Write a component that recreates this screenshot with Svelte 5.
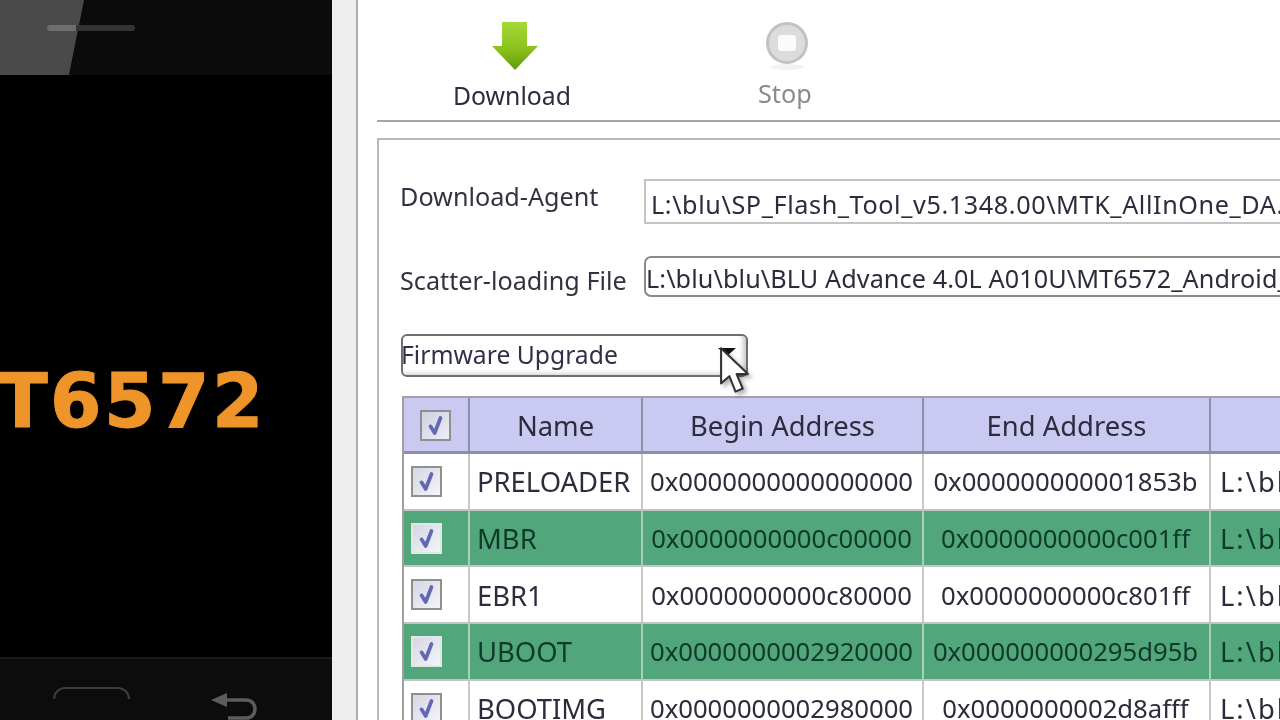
<script>
  const rows = [
    { name: 'PRELOADER', begin: '0x0000000000000000', end: '0x000000000001853b', hot: false },
    { name: 'MBR', begin: '0x0000000000c00000', end: '0x0000000000c001ff', hot: true },
    { name: 'EBR1', begin: '0x0000000000c80000', end: '0x0000000000c801ff', hot: false },
    { name: 'UBOOT', begin: '0x0000000002920000', end: '0x000000000295d95b', hot: true },
    { name: 'BOOTIMG', begin: '0x0000000002980000', end: '0x0000000002d8afff', hot: false }
  ];
</script>

{#snippet check(cls)}
  <span class="cb {cls}">
    <svg viewBox="0 0 30 30" width="25" height="25" aria-hidden="true">
      <path d="M9 16 L14 24 L21 6" fill="none" stroke="#6468b4" stroke-width="4.4" stroke-linecap="round" stroke-linejoin="round" />
    </svg>
  </span>
{/snippet}

<div class="screen">
  <aside class="phone">
    <div class="status">
      <span class="glare"></span>
      <span class="speaker"></span>
    </div>
    <div class="display"><span class="chip">MT6572</span></div>
    <div class="nav">
      <span class="home"></span>
      <svg class="back" viewBox="0 0 52 30" width="52" height="30" aria-hidden="true">
        <path d="M3 8 L19 1 L19 15 Z" fill="#5c5c5c" />
        <path d="M16 8 H38 C50 8 50 26 38 26 H20" fill="none" stroke="#5c5c5c" stroke-width="3.6" />
      </svg>
    </div>
  </aside>

  <div class="gutter"></div>

  <main class="main">
    <header class="toolbar">
      <button class="tool download">
        <svg viewBox="0 0 48 50" width="48" height="50" aria-hidden="true">
          <defs>
            <linearGradient id="arrow" x1="0" y1="0" x2="0" y2="1">
              <stop offset="0" stop-color="#a6d83a" />
              <stop offset="0.55" stop-color="#8cc21c" />
              <stop offset="1" stop-color="#5f9a0c" />
            </linearGradient>
          </defs>
          <path d="M11 1 H36 V25 H47 L24 49 L1 25 H11 Z" fill="url(#arrow)" />
        </svg>
        <span>Download</span>
      </button>
      <button class="tool stop">
        <svg viewBox="0 0 46 50" width="46" height="50" aria-hidden="true">
          <ellipse cx="23" cy="46" rx="17" ry="3" fill="#f2f2f2" />
          <circle cx="23" cy="22" r="19.5" fill="#dcdcdc" stroke="#c2c2c2" stroke-width="3" />
          <rect x="14" y="14" width="18" height="16" rx="3" fill="#fbfbfb" />
        </svg>
        <span>Stop</span>
      </button>
    </header>

    <section class="panel">
      <div class="fields">
        <span class="label first">Download-Agent</span>
        <div class="path agent">L:\blu\SP_Flash_Tool_v5.1348.00\MTK_AllInOne_DA.bin</div>
        <span class="label second">Scatter-loading File</span>
        <div class="path scatter">L:\blu\blu\BLU Advance 4.0L A010U\MT6572_Android_scatter.txt</div>
      </div>

      <div class="select">
        <span>Firmware Upgrade</span>
        <span class="caret"></span>
        <svg class="cursor" viewBox="0 0 32 48" width="33" height="50" aria-hidden="true">
          <path d="M3 2 V36 L11 29 L17 44 L24 41 L18 27 H29 Z" fill="#fff" stroke="#333" stroke-width="2" stroke-linejoin="round" />
        </svg>
      </div>

      <div class="table">
        <div class="row head">
          <div class="cell box">{@render check('head-cb')}</div>
          <div class="cell mid">Name</div>
          <div class="cell mid">Begin Address</div>
          <div class="cell mid">End Address</div>
          <div class="cell"></div>
        </div>
        {#each rows as r}
          <div class="row" class:hot={r.hot}>
            <div class="cell box">{@render check('')}</div>
            <div class="cell name">{r.name}</div>
            <div class="cell mid hex">{r.begin}</div>
            <div class="cell mid hex">{r.end}</div>
            <div class="cell file">L:\blu\blu\BLU Advance</div>
          </div>
        {/each}
      </div>
    </section>
  </main>
</div>

<style>
  :global(body) { margin: 0; background: #fff; }
  .screen {
    display: flex;
    width: 1280px;
    height: 720px;
    overflow: hidden;
    font-family: "Noto Sans", "Open Sans", sans-serif;
    font-size: 25.2px;
    color: #2c2c3c;
    filter: blur(0.5px);
  }

  /* phone */
  .phone {
    position: relative;
    flex: 0 0 332px;
    display: flex;
    flex-direction: column;
    background: #000;
    overflow: hidden;
  }
  .status { position: relative; flex: 0 0 75px; background: #0b0b0b; }
  .glare {
    position: absolute; left: 0; top: 0; width: 84px; height: 75px;
    background: #4a4a4a;
    clip-path: polygon(0 0, 100% 0, 82% 100%, 0 100%);
  }
  .speaker {
    position: absolute; left: 47px; top: 25px; width: 88px; height: 6px;
    border-radius: 3px;
    background: linear-gradient(90deg, #6e6e6e 0 33%, #333 33% 100%);
  }
  .display {
    flex: 1;
    min-height: 0;
    display: flex;
    align-items: center;
    overflow: hidden;
    box-sizing: border-box;
    padding-top: 69px;
  }
  .chip {
    margin-left: -79px;
    font-family: "DejaVu Sans", sans-serif;
    font-weight: 700;
    font-size: 74px;
    letter-spacing: 2.5px;
    line-height: 90px;
    color: #ee9428;
    -webkit-text-stroke: 1px #ee9428;
    white-space: nowrap;
  }
  .nav {
    flex: 0 0 63px;
    min-height: 0;
    overflow: hidden;
    display: flex;
    align-items: flex-start;
    gap: 78px;
    padding: 28px 0 0 53px;
    box-sizing: border-box;
    background: #0c0c0c;
    border-top: 2px solid #1a1a1a;
  }
  .home {
    flex: 0 0 77px;
    height: 12px;
    border: 2px solid #3c3c3c;
    border-bottom: 0;
    border-radius: 12px 12px 0 0;
    box-sizing: border-box;
  }
  .back { margin-top: 5px; flex: none; }

  .gutter {
    flex: 0 0 24px;
    background: #eeeeee;
    border-right: 2px solid #ababab;
  }

  /* main */
  .main { flex: 1; min-width: 0; padding-left: 19px; background: #fff; }
  .toolbar {
    height: 120px;
    box-sizing: content-box;
    display: flex;
    align-items: flex-start;
    border-bottom: 2px solid #a6a6a6;
  }
  .tool {
    display: flex;
    flex-direction: column;
    align-items: center;
    border: 0;
    background: none;
    padding: 0;
    font: inherit;
    color: inherit;
  }
  .download { margin-left: 76px; padding-top: 21px; font-size: 24.8px; }
  .download svg { margin-left: 6px; }
  .download span { margin-top: 5px; line-height: 38px; color: #2c2c40; }
  .stop { margin-left: 187px; padding-top: 21px; }
  .stop svg { margin-left: 4px; }
  .stop span { margin-top: 3px; line-height: 38px; color: #8a8a8a; }

  .panel {
    margin-top: 16px;
    border-top: 2px solid #b8b8b8;
    border-left: 2px solid #b8b8b8;
    padding: 39px 0 0 21px;
  }
  .fields {
    display: grid;
    grid-template-columns: 244px 1fr;
    grid-template-rows: 45px 41px;
    row-gap: 32px;
    height: 118px;
  }
  .label { white-space: nowrap; line-height: 36px; color: #333340; }
  .label.first { margin-top: -1px; }
  .label.second { margin-top: 6px; }
  .path {
    box-sizing: border-box;
    white-space: nowrap;
    overflow: hidden;
    background: #fff;
  }
  .agent {
    border: 2px solid #c4c4c4;
    border-right: 0;
    padding-left: 5px;
    line-height: 47px;
    letter-spacing: 0.6px;
  }
  .scatter {
    border: 2px solid #8a8a8a;
    border-right: 0;
    border-radius: 7px 0 0 7px;
    line-height: 41px;
    letter-spacing: 0.1px;
  }
  .select {
    position: relative;
    box-sizing: border-box;
    display: flex;
    align-items: center;
    justify-content: space-between;
    width: 347px;
    height: 43px;
    margin-top: 37px;
    margin-left: 1px;
    border: 2px solid #6e6e6e;
    border-radius: 6px;
    box-shadow: inset -5px -3px 5px -2px #c8c8c8;
    line-height: 38px;
    font-size: 24.7px;
    color: #303048;
  }
  .select > span:first-child { margin-left: -2px; margin-top: -2px; }
  .caret {
    width: 0; height: 0;
    margin-right: 10px;
    margin-bottom: 8px;
    border-left: 9px solid transparent;
    border-right: 9px solid transparent;
    border-top: 8px solid #111;
  }
  .cursor {
    position: absolute;
    left: 315px;
    top: 10px;
    filter: drop-shadow(3px 3px 2px rgba(0,0,0,.3));
  }

  .table {
    margin-top: 19px;
    margin-left: 2px;
    border-top: 2px solid #a0a0b0;
    border-left: 2px solid #a0a0a0;
    font-size: 27.4px;
  }
  .row {
    display: grid;
    grid-template-columns: 66px 173px 281px 287px 200px;
    height: 56.7px;
    box-sizing: border-box;
    border-bottom: 2px solid #c4c4c4;
    background: #fff;
  }
  .row.head { background: #c9c9f1; border-bottom: 3px solid #8e8ea8; height: 56px; }
  .row.hot { background: #52a67b; color: #0e3a2a; }
  .cell {
    display: flex;
    align-items: center;
    white-space: nowrap;
    overflow: hidden;
    box-sizing: border-box;
    border-right: 2px solid #c8c8c8;
    padding-top: 1px;
  }
  .hex { font-size: 25.7px; letter-spacing: -0.02px; padding-right: 2px; }
  .row.head .cell { border-right: 2px solid #8e8ea8; }
  .row.hot .cell { border-right-color: #a9cdb9; }
  .mid { justify-content: center; }
  .name { padding-left: 7px; }
  .file { padding-left: 9px; border-right: 0; letter-spacing: 2px; }
  .box { padding-left: 7px; padding-top: 0; }
  .cb {
    display: flex;
    align-items: center;
    justify-content: center;
    width: 31px;
    height: 31px;
    box-sizing: border-box;
    border: 2px solid #8f8f8f;
    background: linear-gradient(135deg, #d6d6e4, #f4f4fa);
  }
  .head-cb { margin-left: 9px; margin-top: 2px; background: linear-gradient(135deg, #cfd0e0, #eeeef8); }
  .row.hot .cb { border-color: #dfe9e4; }
</style>
